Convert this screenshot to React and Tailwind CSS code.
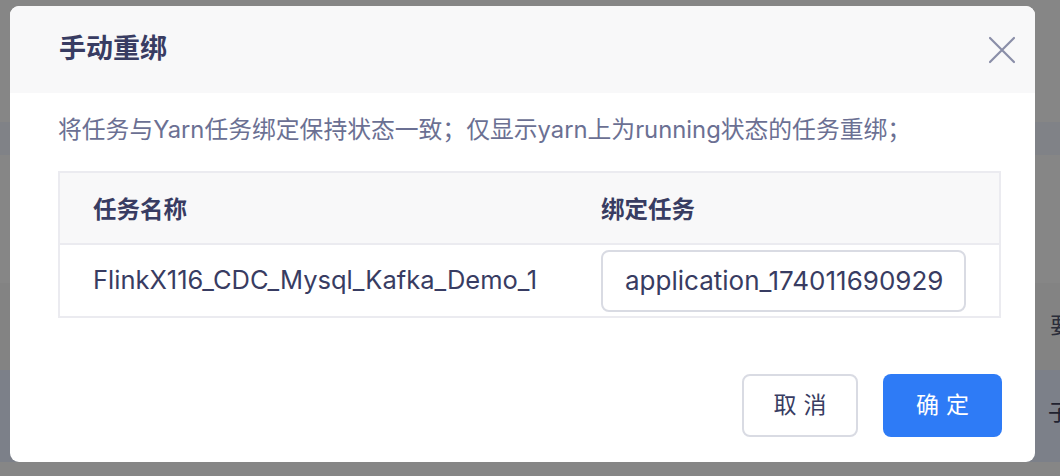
import React from "react";

const font = { fontFamily: '"Inter", "Noto Sans CJK SC", sans-serif' };

const Backdrop = () => (
    <div className="flex h-[476px] w-full flex-col bg-[#868686]">
        <div className="h-[122px]" />
        <div className="h-[33px] bg-[#808287]" />
        <div className="h-[128px]" />
        <div className="flex h-[87px] items-center justify-end bg-[#838383] pb-[2px] text-[22px] text-[#2a2d3a]">
            <span className="mr-[-12px]">要</span>
        </div>
        <div className="flex h-[92px] items-center justify-end bg-[#7c8089] pb-[8px] text-[22px] text-[#1f2230]">
            <span className="mr-[-10px]">子</span>
        </div>
        <div className="flex-1" />
    </div>
);

const CloseIcon = () => (
    <svg width="28" height="28" viewBox="0 0 28 28" fill="none">
        <path
            d="M2 2L26 26M26 2L2 26"
            stroke="#8a8ea8"
            strokeWidth="2.2"
            strokeLinecap="round"
        />
    </svg>
);

export default function App() {
    return (
        <div className="relative h-[476px] w-[1060px] overflow-hidden" style={font}>
            <Backdrop />
            <div className="absolute left-[10px] top-[6px] flex h-[456px] w-[1025px] flex-col overflow-hidden rounded-[9px] bg-white">
                <header className="flex h-[87px] items-center justify-between bg-[#f8f8f9] pl-[49px] pr-[19px]">
                    <h1 className="text-[27px] font-bold text-[#383c62]">手动重绑</h1>
                    <button className="p-0">
                        <CloseIcon />
                    </button>
                </header>

                <div className="px-[48px] pt-[21px]">
                    <p className="text-[23.8px] leading-[32px] text-[#6b7093]">
                        将任务与Yarn任务绑定保持状态一致；仅显示yarn上为running状态的任务重绑；
                    </p>

                    <table className="mt-[25px] w-[943px] border-collapse border-2 border-[#ebebf0] text-[#383c62]">
                        <thead>
                            <tr className="h-[72px] bg-[#f8f8f9] text-left">
                                <th className="w-[510px] pl-[33px] pt-[3px] text-[23.5px] font-bold">任务名称</th>
                                <th className="pl-[32px] pt-[3px] text-[23.5px] font-bold">绑定任务</th>
                            </tr>
                        </thead>
                        <tbody>
                            <tr className="h-[73px] border-t-2 border-[#ebebf0]">
                                <td className="pl-[33px] text-[25.5px]">FlinkX116_CDC_Mysql_Kafka_Demo_1</td>
                                <td className="pl-[32px]">
                                    <div className="flex h-[62px] w-[365px] items-center rounded-[8px] border-2 border-[#d9dbe3] px-[22px] text-[26px]">
                                        application_174011690929
                                    </div>
                                </td>
                            </tr>
                        </tbody>
                    </table>
                </div>

                <div className="mt-auto flex justify-end gap-[25px] pb-[25px] pr-[33px]">
                    <button className="h-[63px] w-[116px] rounded-[8px] border-2 border-[#d9dbe3] bg-white text-[23px] tracking-[7px] text-[#383c62]">
                        <span className="ml-[7px]">取消</span>
                    </button>
                    <button className="h-[63px] w-[119px] rounded-[8px] bg-[#2e7bf6] text-[23px] tracking-[7px] text-white">
                        <span className="ml-[7px]">确定</span>
                    </button>
                </div>
            </div>
        </div>
    );
}
